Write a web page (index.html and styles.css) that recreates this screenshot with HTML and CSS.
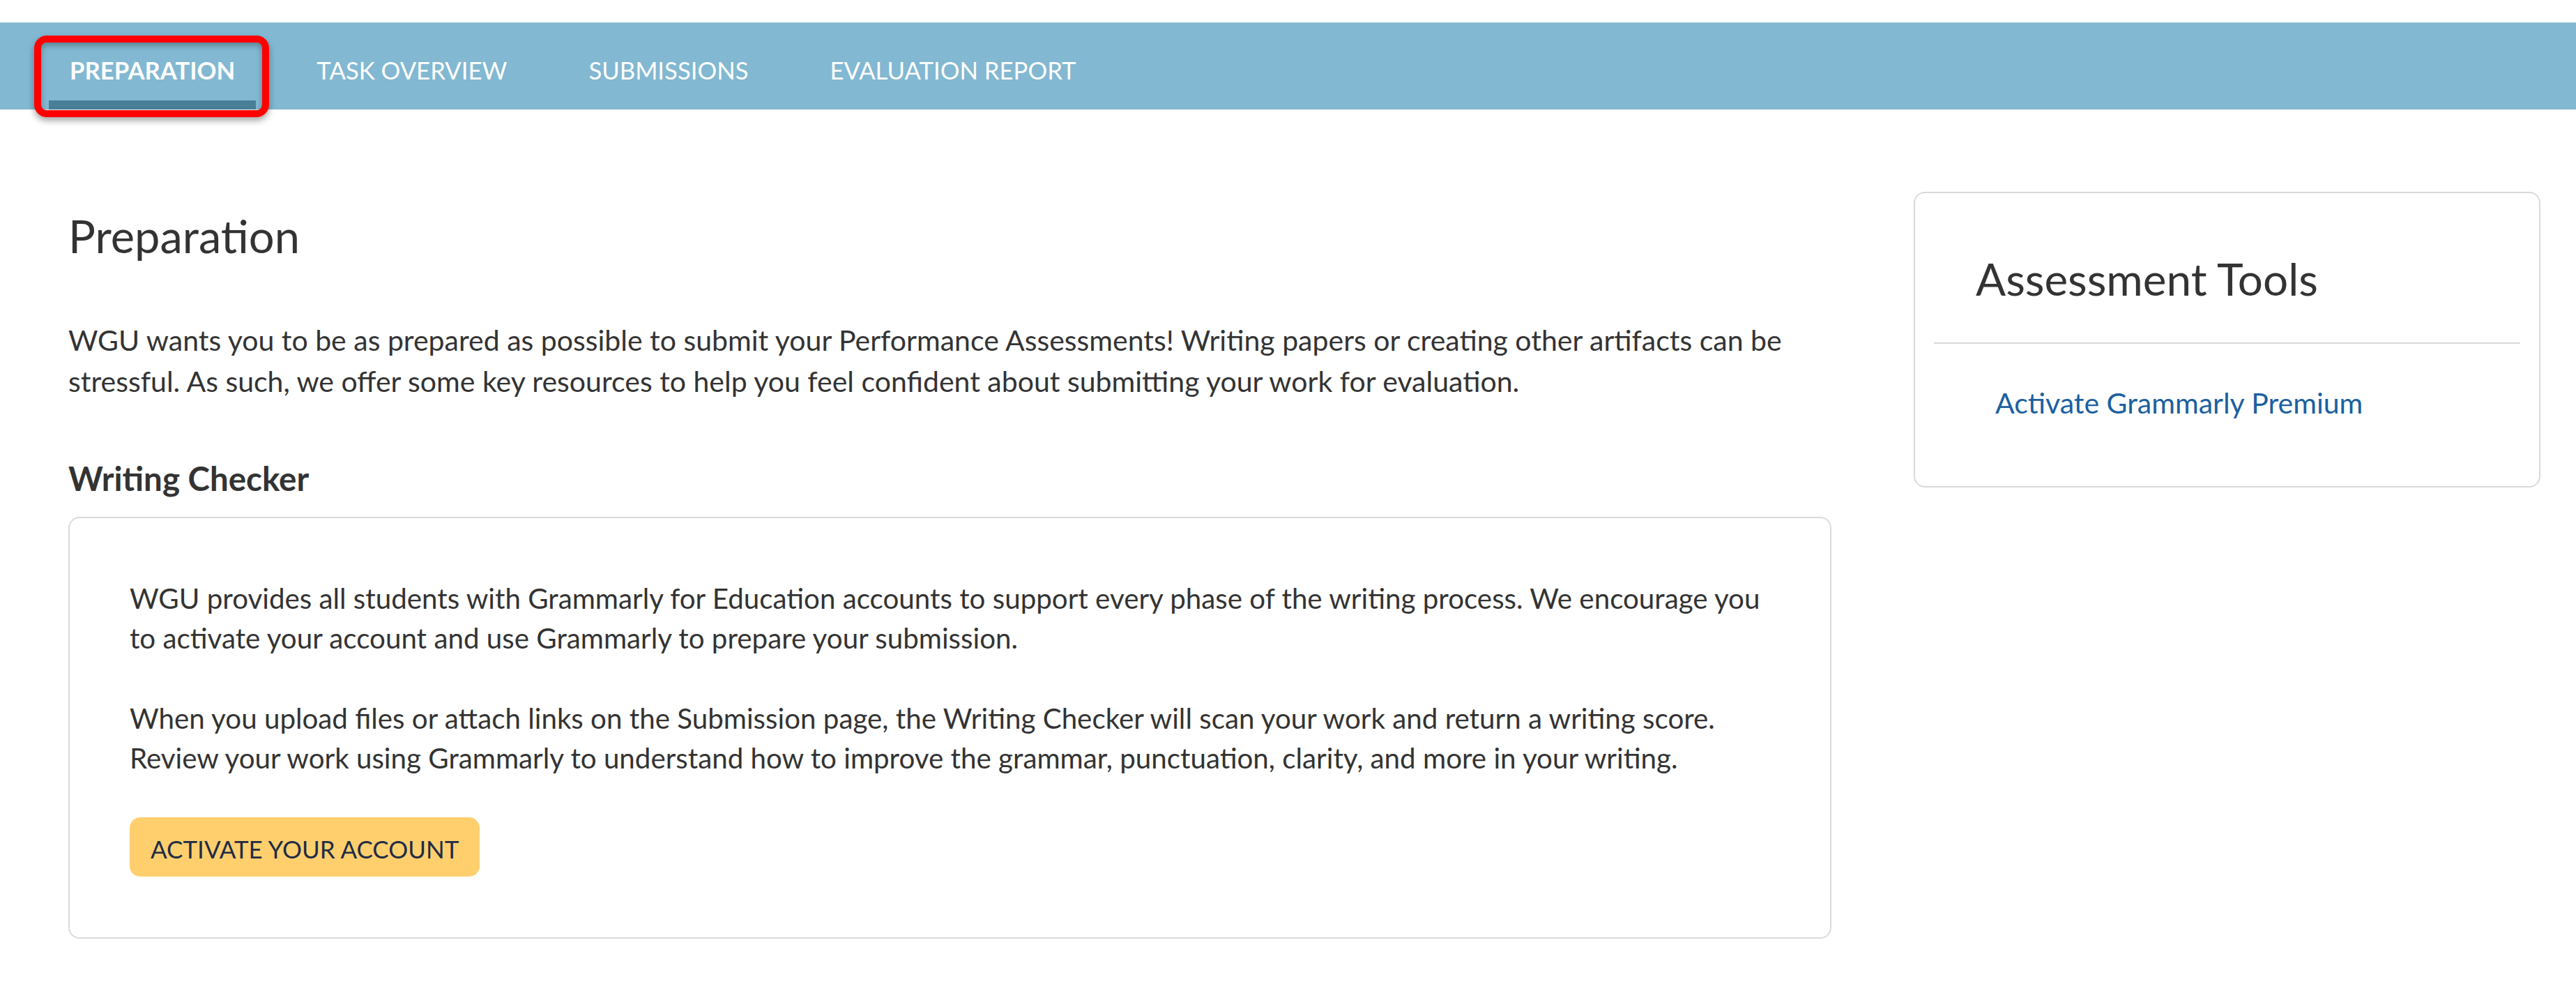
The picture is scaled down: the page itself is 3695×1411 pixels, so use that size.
FILE: index.html
```html
<!DOCTYPE html>
<html lang="en">
<head>
<meta charset="utf-8">
<title>Preparation</title>
<link rel="stylesheet" href="styles.css">
</head>
<body>
<div class="topspace"></div>
<nav class="tabs">
  <a class="tab active" href="#">PREPARATION<span class="highlight"></span></a>
  <a class="tab" href="#">TASK OVERVIEW</a>
  <a class="tab" href="#">SUBMISSIONS</a>
  <a class="tab" href="#">EVALUATION REPORT</a>
</nav>
<main class="page">
  <section class="content">
    <h1 class="title">Preparation</h1>
    <p class="lead">WGU wants you to be as prepared as possible to submit your Performance Assessments! Writing papers or creating other artifacts can be stressful. As such, we offer some key resources to help you feel confident about submitting your work for evaluation.</p>
    <h2 class="subtitle">Writing Checker</h2>
    <div class="card">
      <p class="card-text">WGU provides all students with Grammarly for Education accounts to support every phase of the writing process. We encourage you to activate your account and use Grammarly to prepare your submission.</p>
      <p class="card-text">When you upload files or attach links on the Submission page, the Writing Checker will scan your work and return a writing score. Review your work using Grammarly to understand how to improve the grammar, punctuation, clarity, and more in your writing.</p>
      <a class="btn" href="#">ACTIVATE YOUR ACCOUNT</a>
    </div>
  </section>
  <aside class="sidebar">
    <div class="tools-card">
      <div class="tools-head"><h3 class="tools-title">Assessment Tools</h3></div>
      <div class="tools-body"><a class="tools-link" href="#">Activate Grammarly Premium</a></div>
    </div>
  </aside>
</main>
</body>
</html>
```
FILE: styles.css
```css
* { box-sizing: border-box; }
html, body { margin: 0; padding: 0; background: #ffffff; }
body {
  font-family: Lato, "Open Sans", "Liberation Sans", sans-serif;
  color: #333333;
}
.topspace { height: 32px; }
.tabs {
  display: flex;
  gap: 57px;
  height: 125px;
  padding-left: 70px;
  background: #82b8d1;
  border-top: 1px solid #a3cbdd;
}
.tab {
  position: relative;
  display: block;
  height: 124px;
  padding: 47px 30px 0;
  font-size: 34.7px;
  line-height: 42px;
  color: #ffffff;
  text-decoration: none;
  font-weight: 400;
}
.tab.active {
  font-weight: 700;
  border-bottom: 13px solid #4a7f98;
}
.highlight {
  position: absolute;
  left: -21px;
  top: 18px;
  width: 337px;
  height: 117px;
  border: 10px solid #ff0000;
  border-radius: 18px;
  box-shadow: 0 5px 10px rgba(0,0,0,0.35), inset 0 4px 9px rgba(0,0,0,0.3);
}
.page {
  display: flex;
  gap: 118px;
  padding: 118px 51px 0 98px;
}
.content { flex: 1; min-width: 0; }
.sidebar { width: 899px; flex: none; }
.title {
  margin: 24px 0 0;
  font-size: 65px;
  font-weight: 400;
  line-height: 78px;
}
.lead {
  margin: 82px 0 0;
  font-size: 41px;
  line-height: 58.6px;
}
.subtitle {
  margin: 81px 0 0;
  font-size: 47.5px;
  font-weight: 700;
  line-height: 57px;
}
.card {
  margin-top: 27px;
  border: 2px solid #dadada;
  border-radius: 16px;
  padding: 86px 86px 87px;
}
.card-text {
  margin: 0 0 57px;
  font-size: 40.3px;
  line-height: 57.2px;
}
.card-text:last-of-type { margin-bottom: 57px; }
.btn {
  display: inline-block;
  padding: 24px 30px 19px;
  font-size: 35px;
  line-height: 42px;
  background: #ffcf6e;
  color: #1f2c45;
  border-radius: 15px;
  text-decoration: none;
}
.tools-card {
  border: 2px solid #d9d9d9;
  border-radius: 16px;
  padding: 0 27px;
}
.tools-head {
  padding: 83px 0 51px 60px;
  border-bottom: 2px solid #dadada;
}
.tools-title {
  margin: 0;
  font-size: 63.8px;
  font-weight: 400;
  line-height: 80px;
}
.tools-body {
  padding: 56px 0 89px 88px;
  font-size: 41px;
  line-height: 58.6px;
}
.tools-link {
  color: #1b60a0;
  text-decoration: none;
}
```
